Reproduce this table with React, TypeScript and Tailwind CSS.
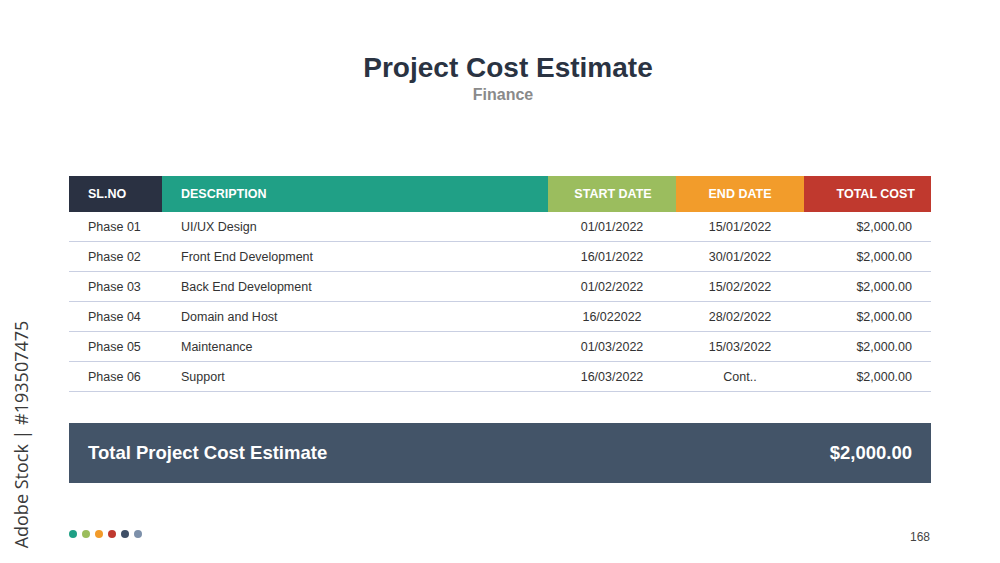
import React from 'react'

const rows = [
  { no: 'Phase 01', desc: 'UI/UX Design', start: '01/01/2022', end: '15/01/2022', cost: '$2,000.00' },
  { no: 'Phase 02', desc: 'Front End Development', start: '16/01/2022', end: '30/01/2022', cost: '$2,000.00' },
  { no: 'Phase 03', desc: 'Back End Development', start: '01/02/2022', end: '15/02/2022', cost: '$2,000.00' },
  { no: 'Phase 04', desc: 'Domain and Host', start: '16/022022', end: '28/02/2022', cost: '$2,000.00' },
  { no: 'Phase 05', desc: 'Maintenance', start: '01/03/2022', end: '15/03/2022', cost: '$2,000.00' },
  { no: 'Phase 06', desc: 'Support', start: '16/03/2022', end: 'Cont..', cost: '$2,000.00' },
]

const dots = ['bg-[#1fa085]', 'bg-[#9bbd5c]', 'bg-[#f29b2a]', 'bg-[#c0392f]', 'bg-[#3e4f66]', 'bg-[#7d90aa]']

export default function App() {
  return (
    <div className="relative w-[1000px] h-[563px] bg-white overflow-hidden font-['Liberation_Sans',Arial,sans-serif]">
      {/* side stock label */}
      <div className="absolute left-[9px] top-[318px] h-[232px] w-[26px] flex items-center justify-center">
        <span className="-rotate-90 whitespace-nowrap text-[18px] text-[#3a3a3a] font-['Open_Sans',sans-serif]">
          Adobe Stock | #193507475
        </span>
      </div>

      <div className="flex flex-col items-center pt-[51px] pl-[16px]">
        <h1 className="text-[28px] leading-[34px] font-bold text-[#2a3342]">Project Cost Estimate</h1>
        <p className="text-[16px] leading-[20px] font-bold text-[#8a8a8a] -ml-[10px]">Finance</p>
      </div>

      <div className="mx-[69px] mt-[71px]">
        {/* header */}
        <div className="grid grid-cols-[93px_386px_128px_128px_127px] h-[36px] text-[12.5px] font-bold text-white">
          <div className="bg-[#2a3142] flex items-center pl-[19px] pt-[1px]">SL.NO</div>
          <div className="bg-[#20a086] flex items-center pl-[19px] pt-[1px]">DESCRIPTION</div>
          <div className="bg-[#9bbd5e] flex items-center justify-center pl-[2px] pt-[1px]">START DATE</div>
          <div className="bg-[#f29c2b] flex items-center justify-center pt-[1px]">END DATE</div>
          <div className="bg-[#c0392e] flex items-center justify-end pr-[16px] pt-[1px]">TOTAL COST</div>
        </div>

        {rows.map((r) => (
          <div
            key={r.no}
            className="grid grid-cols-[93px_386px_128px_128px_127px] h-[30px] items-center border-b border-[#c9cfe2] text-[12.5px] text-[#333] pt-[2px]"
          >
            <div className="pl-[19px]">{r.no}</div>
            <div className="pl-[19px]">{r.desc}</div>
            <div className="text-center">{r.start}</div>
            <div className="text-center">{r.end}</div>
            <div className="text-right pr-[19px]">{r.cost}</div>
          </div>
        ))}

        {/* total */}
        <div className="mt-[31px] h-[60px] bg-[#435468] flex items-center justify-between px-[19px] text-white font-bold text-[18.5px]">
          <span>Total Project Cost Estimate</span>
          <span>$2,000.00</span>
        </div>
      </div>

      <div className="absolute left-[69px] right-[70px] top-[530px] flex items-start justify-between">
        <div className="flex gap-[5px]">
          {dots.map((d) => (
            <span key={d} className={`w-[8px] h-[8px] rounded-full ${d}`} />
          ))}
        </div>
        <span className="text-[12px] leading-[14px] text-[#444]">168</span>
      </div>
    </div>
  )
}
